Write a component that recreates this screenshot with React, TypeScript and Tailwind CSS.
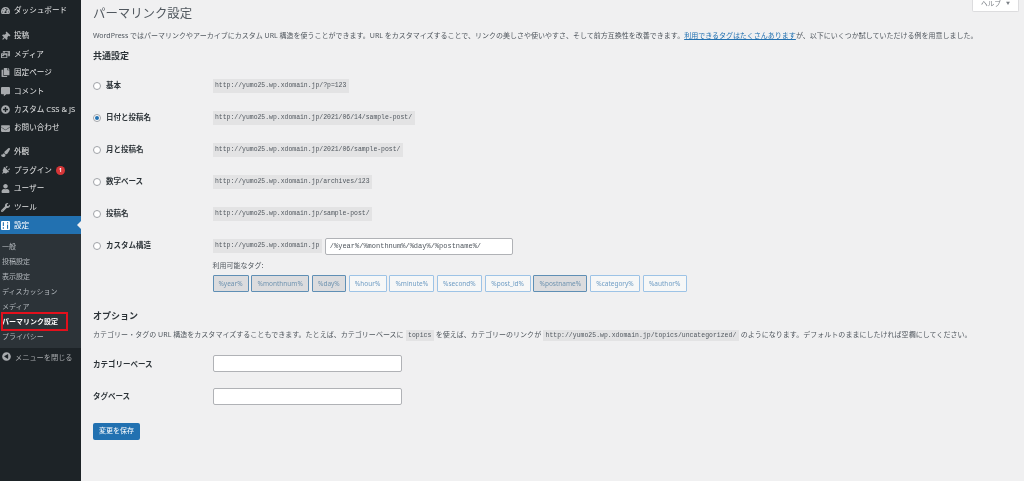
import React from "react";
import { FaTachometerAlt, FaThumbtack, FaPhotoVideo, FaCopy, FaCommentAlt, FaPlusCircle, FaEnvelope, FaPaintBrush, FaPlug, FaUser, FaWrench, FaPlayCircle } from "react-icons/fa";

const cjk = { fontFamily: '"Noto Sans", "Noto Sans CJK JP", sans-serif' };

function TiltPin({ size }: { size: number }) {
  return <FaThumbtack size={size} className="rotate-45" />;
}
function TiltPlug({ size }: { size: number }) {
  return <FaPlug size={size} className="rotate-45" />;
}

function MenuItem({ Icon, label, badge }: { Icon: any; label: string; badge?: boolean }) {
  return (
    <div className="flex h-[18.4px] items-center text-[7.6px] text-[#e4e5e6]">
      <span className="flex w-[14px] shrink-0 justify-center pr-[3px] text-[#a7aaad]"><Icon size={9} /></span>
      <span className="whitespace-nowrap">{label}</span>
      {badge && (
        <span className="ml-[4px] flex h-[9px] w-[9px] items-center justify-center rounded-full bg-[#d63638] text-[5px] font-bold text-white">1</span>
      )}
    </div>
  );
}

function Sidebar() {
  const subs = ["一般", "投稿設定", "表示設定", "ディスカッション", "メディア"];
  return (
    <aside className="flex h-[481px] w-[81px] shrink-0 flex-col bg-[#1d2327] pt-[1px]">
      <MenuItem Icon={FaTachometerAlt} label="ダッシュボード" />
      <div className="h-[7.6px]" />
      <MenuItem Icon={TiltPin} label="投稿" />
      <MenuItem Icon={FaPhotoVideo} label="メディア" />
      <MenuItem Icon={FaCopy} label="固定ページ" />
      <MenuItem Icon={FaCommentAlt} label="コメント" />
      <MenuItem Icon={FaPlusCircle} label="カスタム CSS & JS" />
      <MenuItem Icon={FaEnvelope} label="お問い合わせ" />
      <div className="h-[5.6px]" />
      <MenuItem Icon={FaPaintBrush} label="外観" />
      <MenuItem Icon={TiltPlug} label="プラグイン" badge />
      <MenuItem Icon={FaUser} label="ユーザー" />
      <MenuItem Icon={FaWrench} label="ツール" />
      <div className="relative flex h-[18px] items-center bg-[#2271b1] text-[7.6px] text-white">
        <span className="flex w-[14px] justify-center pr-[3px]">
          <svg width="9" height="9" viewBox="0 0 9 9">
            <rect width="9" height="9" rx="1" fill="#fff" />
            <rect x="1.8" y="1.2" width="1.1" height="6.6" fill="#2271b1" />
            <rect x="6" y="1.2" width="1.1" height="6.6" fill="#2271b1" />
            <rect x="1" y="5" width="2.7" height="1.2" fill="#fff" />
            <rect x="5.2" y="2.4" width="2.7" height="1.2" fill="#fff" />
          </svg>
        </span>
        設定
        <span className="absolute right-0 top-[5px] h-0 w-0 border-y-[4px] border-r-[4px] border-y-transparent border-r-[#f0f0f1]" />
      </div>
      <div className="flex flex-col bg-[#2c3338] pb-[3.5px] pt-[5px] text-[7px] text-[#b4b9be]">
        {subs.map((s) => (
          <div key={s} className="flex h-[15px] items-center whitespace-nowrap pl-[2px]">{s}</div>
        ))}
        <div className="relative flex h-[15px] items-center whitespace-nowrap pl-[2px] font-bold text-white">
          パーマリンク設定
          <span className="absolute left-px top-[-2px] h-[19px] w-[67px] border-[2px] border-[#e3101c]" />
        </div>
        <div className="flex h-[15px] items-center whitespace-nowrap pl-[2px]">プライバシー</div>
      </div>
      <div className="flex h-[18px] items-center text-[7.2px] text-[#a7aaad]">
        <span className="flex w-[15px] justify-center pr-[3px]"><FaPlayCircle size={9} className="rotate-180" /></span>
        メニューを閉じる
      </div>
    </aside>
  );
}

function Code({ children }: { children: React.ReactNode }) {
  return (
    <code className="whitespace-nowrap bg-[#e3e3e4] px-[2.5px] py-[2px] text-[6.45px] text-[#50575e]" style={{ fontFamily: '"Liberation Mono", monospace' }}>
      {children}
    </code>
  );
}

function Radio({ checked }: { checked?: boolean }) {
  return (
    <span className="flex h-[8px] w-[8px] shrink-0 items-center justify-center rounded-full border border-[#a0a3a8] bg-white">
      {checked && <span className="h-[4px] w-[4px] rounded-full bg-[#2271b1]" />}
    </span>
  );
}

function Option({ label, url, checked }: { label: string; url: string; checked?: boolean }) {
  return (
    <div className="flex h-[32px] items-center">
      <div className="flex w-[119.5px] shrink-0 items-center gap-[5px] text-[7.5px] font-semibold text-[#2c3338]">
        <Radio checked={checked} />
        {label}
      </div>
      <Code>{url}</Code>
    </div>
  );
}

const tags: [string, number, boolean][] = [
  ["%year%", 36, true],
  ["%monthnum%", 58, true],
  ["%day%", 34, true],
  ["%hour%", 38, false],
  ["%minute%", 45, false],
  ["%second%", 45, false],
  ["%post_id%", 46, false],
  ["%postname%", 54, true],
  ["%category%", 50, false],
  ["%author%", 44, false],
];

function Field({ label }: { label: string }) {
  return (
    <div className="flex h-[32.5px] items-center">
      <div className="w-[119.5px] shrink-0 pt-px text-[7.5px] font-semibold text-[#2c3338]">{label}</div>
      <div className="h-[17px] w-[189px] rounded-[2px] border border-[#b0b2b6] bg-white" />
    </div>
  );
}

export default function App() {
  return (
    <div className="relative flex h-[481px] w-[1024px] overflow-hidden bg-[#f0f0f1] blur-[0.4px]" style={cjk}>
      <Sidebar />
      <main className="flex min-w-0 flex-1 flex-col pl-[12px] pt-px text-[#50575e]">
        <div className="flex h-[28px] items-start justify-between">
          <h1 className="pt-[3px] text-[12.4px] leading-[20px] text-[#50575e]">パーマリンク設定</h1>
          <div className="mr-[5px] mt-[-1px] flex h-[12px] w-[47px] items-center justify-center gap-[5px] rounded-b-[2px] border border-t-0 border-[#dcdcde] bg-white pb-[3px] text-[6.7px] leading-none text-[#7a7f85]">
            ヘルプ <span className="text-[4px]">▼</span>
          </div>
        </div>
        <p className="h-[14px] whitespace-nowrap text-[7px] leading-[14px]">
          WordPress ではパーマリンクやアーカイブにカスタム URL 構造を使うことができます。URL をカスタマイズすることで、リンクの美しさや使いやすさ、そして前方互換性を改善できます。<a className="text-[#2271b1] underline">利用できるタグはたくさんあります</a>が、以下にいくつか試していただける例を用意しました。
        </p>
        <h2 className="mt-[5px] h-[22px] text-[9px] font-semibold leading-[16px] text-[#2c3338]">共通設定</h2>

        <Option label="基本" url="http://yumo25.wp.xdomain.jp/?p=123" />
        <Option label="日付と投稿名" url="http://yumo25.wp.xdomain.jp/2021/06/14/sample-post/" checked />
        <Option label="月と投稿名" url="http://yumo25.wp.xdomain.jp/2021/06/sample-post/" />
        <Option label="数字ベース" url="http://yumo25.wp.xdomain.jp/archives/123" />
        <Option label="投稿名" url="http://yumo25.wp.xdomain.jp/sample-post/" />

        <div className="flex pt-[8px]">
          <div className="flex h-[16px] w-[119.5px] shrink-0 items-center gap-[5px] text-[7.5px] font-semibold text-[#2c3338]">
            <Radio />
            カスタム構造
          </div>
          <div className="flex flex-col">
            <div className="flex h-[16px] items-center gap-[3px]">
              <Code>http://yumo25.wp.xdomain.jp</Code>
              <div className="flex h-[17px] w-[188px] items-center rounded-[2px] border border-[#b0b2b6] bg-white px-[4px] text-[7px] text-[#50575e]" style={{ fontFamily: '"Liberation Mono", monospace' }}>
                /%year%/%monthnum%/%day%/%postname%/
              </div>
            </div>
            <div className="mt-[6px] h-[12px] text-[7px] leading-[12px]">利用可能なタグ:</div>
            <div className="mt-[3px] flex gap-[2.7px]">
              {tags.map(([t, w, active]) => (
                <span
                  key={t}
                  className={
                    active
                      ? "flex h-[17px] items-center justify-center rounded-[1px] border border-[#5f8fb5] bg-[#dcdcde] text-[6.5px] text-[#6f93b0]"
                      : "flex h-[17px] items-center justify-center rounded-[1px] border border-[#9dc3e6] bg-[#f6f7f7] text-[6.5px] text-[#6f9dc4]"
                  }
                  style={{ width: w }}
                >
                  {t}
                </span>
              ))}
            </div>
          </div>
        </div>

        <h2 className="mt-[16px] h-[16px] text-[9px] font-semibold leading-[16px] text-[#2c3338]">オプション</h2>
        <p className="mt-[4px] h-[14px] whitespace-nowrap text-[7px] leading-[14px] tracking-[0.03px]">
          カテゴリー・タグの URL 構造をカスタマイズすることもできます。たとえば、カテゴリーベースに <Code>topics</Code> を使えば、カテゴリーのリンクが <Code>http://yumo25.wp.xdomain.jp/topics/uncategorized/</Code> のようになります。デフォルトのままにしたければ空欄にしてください。
        </p>
        <div className="h-[5.5px]" />
        <Field label="カテゴリーベース" />
        <Field label="タグベース" />
        <button className="mt-[10.5px] h-[17px] w-[47px] rounded-[2px] bg-[#2271b1] text-[7px] text-white">変更を保存</button>
      </main>
    </div>
  );
}
